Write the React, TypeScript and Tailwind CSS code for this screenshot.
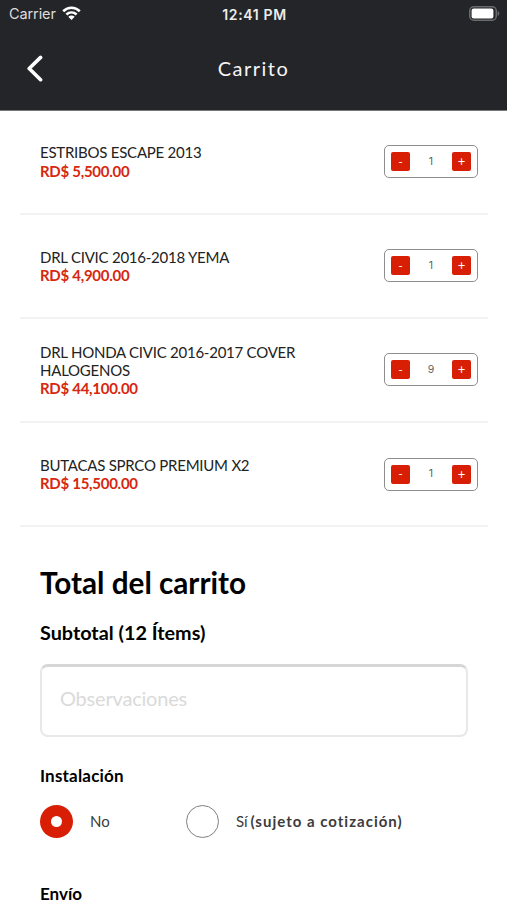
import { useState } from 'react';

type CartItem = {
  id: number;
  name: string;
  price: number;
  quantity: number;
};

const initialItems: CartItem[] = [
  { id: 1, name: 'ESTRIBOS ESCAPE 2013', price: 5500, quantity: 1 },
  { id: 2, name: 'DRL CIVIC 2016-2018 YEMA', price: 4900, quantity: 1 },
  { id: 3, name: 'DRL HONDA CIVIC 2016-2017 COVER HALOGENOS', price: 4900, quantity: 9 },
  { id: 4, name: 'BUTACAS SPRCO PREMIUM X2', price: 15500, quantity: 1 },
];

const formatPrice = (value: number) =>
  `RD$ ${value.toLocaleString('en-US', { minimumFractionDigits: 2 })}`;

function StatusBar() {
  return (
    <div className="grid h-[28px] grid-cols-[1fr_auto_1fr] items-center pl-[9px] pr-[7px] font-['Inter'] text-[14.5px] leading-none">
      <div className="flex items-center gap-[6px] text-[#dcdcdd]">
        <span className="tracking-[-0.1px]">Carrier</span>
        <svg className="-mt-[2px] h-[14px] w-[19px]" viewBox="0 0 19 14" fill="none" stroke="#fff" strokeWidth="2.6">
          <path d="M1.2 5.2C6 .6 13 .6 17.8 5.2" />
          <path d="M4.4 8.5c3-2.7 7.2-2.7 10.2 0" />
          <path d="M9.5 14 6.3 10.800c1.800-1.600 4.600-1.600 6.400 0z" fill="#fff" stroke="none" />
        </svg>
      </div>
      <span className="pt-[2px] text-center text-[14px] font-semibold tracking-[0.65px] text-[#ececec]">
        12:41 PM
      </span>
      <svg className="-mt-px h-[15px] w-[31px] justify-self-end" viewBox="0 0 31 15" fill="none">
        <rect x="0.75" y="0.75" width="26.5" height="13.5" rx="4" stroke="#6b6b6d" strokeWidth="1.5" />
        <rect x="2.6" y="2.6" width="21.8" height="9.8" rx="2" fill="#fff" />
        <path d="M28.6 5v5c1.2-.5 1.8-1.4 1.8-2.5S29.8 5.5 28.6 5z" fill="#6b6b6d" />
      </svg>
    </div>
  );
}

function Header() {
  return (
    <header className="h-[110.5px] border-b border-[#77787a] bg-[#242529] text-white">
      <StatusBar />
      <div className="grid h-[80px] grid-cols-[1fr_auto_1fr] items-center">
        <button className="ml-[26px] w-[17px]" aria-label="Volver">
          <svg className="h-[27px] w-[17px]" viewBox="0 0 17 27" fill="none" stroke="currentColor">
            <path d="M14.6 2.4 3.2 13.5l11.400 11.200" strokeWidth="3.6" strokeLinecap="round" strokeLinejoin="round" />
          </svg>
        </button>
        <h1 className="text-[20px] tracking-[1.5px] text-[#f5f5f5]">Carrito</h1>
      </div>
    </header>
  );
}

function Stepper({ value, onChange }: { value: number; onChange: (next: number) => void }) {
  return (
    <div className="flex h-[33px] w-[94px] items-center justify-between rounded-[5px] border border-[#8e8e8e] px-[6px]">
      <button
        onClick={() => onChange(Math.max(1, value - 1))}
        className="flex size-[19px] items-center justify-center rounded-[2px] bg-[#d81e05] text-[12px] leading-none text-white"
      >
        -
      </button>
      <span className="font-['Inter'] text-[10.5px] text-[#606060]">{value}</span>
      <button
        onClick={() => onChange(value + 1)}
        className="flex size-[19px] items-center justify-center rounded-[2px] bg-[#d81e05] text-[13px] leading-none text-white"
      >
        +
      </button>
    </div>
  );
}

function Radio({ checked, onClick }: { checked: boolean; onClick: () => void }) {
  return (
    <button
      role="radio"
      aria-checked={checked}
      onClick={onClick}
      className={`flex size-[33px] shrink-0 items-center justify-center rounded-full ${
        checked ? 'bg-[#d81e05]' : 'border border-[#808080] bg-white'
      }`}
    >
      {checked && <span className="size-[11px] rounded-full bg-white" />}
    </button>
  );
}

export default function App() {
  const [items, setItems] = useState(initialItems);
  const [install, setInstall] = useState(false);

  const setQuantity = (id: number, quantity: number) => {
    setItems(items.map(item => (item.id === id ? { ...item, quantity } : item)));
  };

  const count = items.reduce((sum, item) => sum + item.quantity, 0);

  return (
    <div className="h-[900px] overflow-hidden bg-white font-['Lato',sans-serif] text-black">
      <Header />

      {/* Cart items */}
      <ul className="pl-[20px] pr-[19px]">
        {items.map(item => (
          <li
            key={item.id}
            className="flex h-[104.2px] items-center justify-between border-b-2 border-[#f3f3f3] pl-[20px] pr-[10px]"
          >
            <div className="w-[290px] text-[15px] leading-[18.2px]">
              <p className="tracking-[-0.24px] text-[#222]">{item.name}</p>
              <p className="font-bold tracking-[-0.28px] text-[#d6270f]">{formatPrice(item.price * item.quantity)}</p>
            </div>
            <Stepper value={item.quantity} onChange={next => setQuantity(item.id, next)} />
          </li>
        ))}
      </ul>

      {/* Totals */}
      <section className="pl-[40px] pr-[39px] pt-[38px]">
        <h2 className="text-[29.7px] leading-[36px] font-bold">Total del carrito</h2>
        <h3 className="mt-[19px] text-[19.8px] leading-[24px] font-bold">Subtotal ({count} Ítems)</h3>
        <textarea
          placeholder="Observaciones"
          className="mt-[20px] block h-[73px] w-full resize-none rounded-[8px] border-2 border-t-[3px] border-[#e8e8e8] border-t-[#d6d6d6] px-[18px] pt-[18px] text-[20px] leading-[26px] tracking-[-0.2px] placeholder:text-[#dadada]"
        />

        <h4 className="mt-[29px] text-[17px] leading-[20px] font-bold tracking-[0.2px]">Instalación</h4>
        <div role="radiogroup" className="mt-[19px] flex items-center text-[15px] text-[#3c3c3c]">
          <Radio checked={!install} onClick={() => setInstall(false)} />
          <span className="ml-[17px] w-[96px] pb-[2px]">No</span>
          <Radio checked={install} onClick={() => setInstall(true)} />
          <span className="ml-[17px] pb-[2px]">
            Sí <b className="-ml-px tracking-[1px]">(sujeto a cotización)</b>
          </span>
        </div>

        <h4 className="mt-[46px] text-[17px] leading-[20px] font-bold">Envío</h4>
      </section>
    </div>
  );
}
